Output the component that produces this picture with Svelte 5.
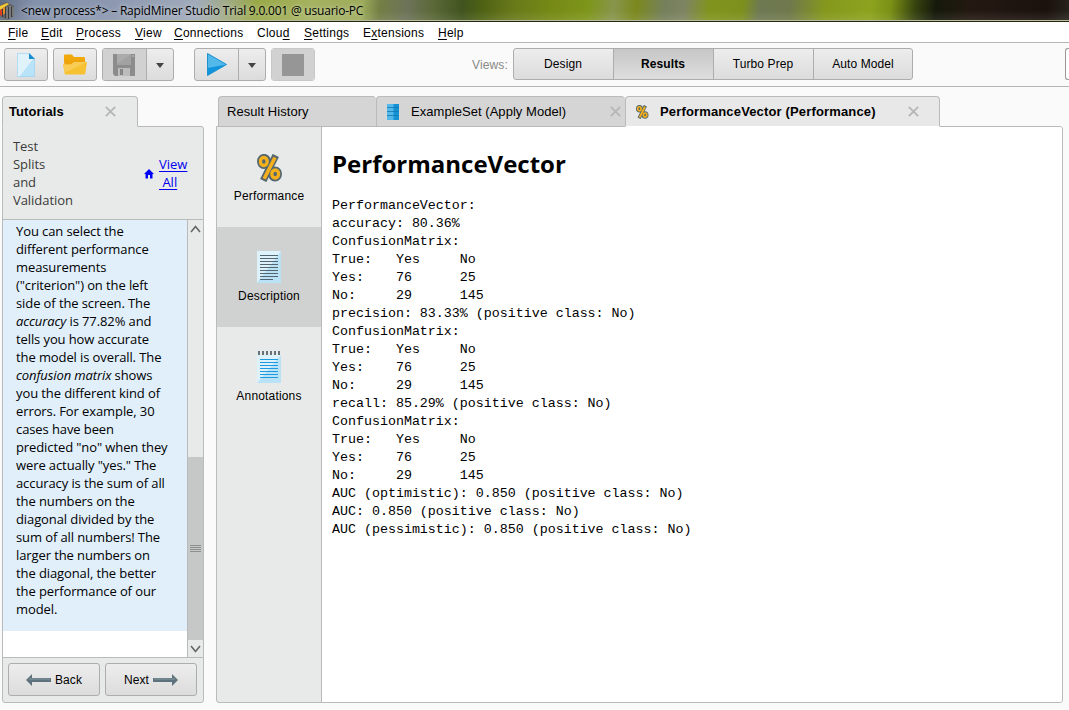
<script>
  const menus = [
    { pre: '', key: 'F', post: 'ile', w: 33 },
    { pre: '', key: 'E', post: 'dit', w: 35 },
    { pre: '', key: 'P', post: 'rocess', w: 59 },
    { pre: '', key: 'V', post: 'iew', w: 39 },
    { pre: '', key: 'C', post: 'onnections', w: 83 },
    { pre: 'Clou', key: 'd', post: '', w: 47 },
    { pre: '', key: 'S', post: 'ettings', w: 59 },
    { pre: 'E', key: 'x', post: 'tensions', w: 75 },
    { pre: '', key: 'H', post: 'elp', w: 40 }
  ];
  const views = ['Design', 'Results', 'Turbo Prep', 'Auto Model'];
  let view = $state('Results');
  const matrix = 'ConfusionMatrix:\nTrue:   Yes     No\nYes:    76      25\nNo:     29      145\n';
  const report =
    'PerformanceVector:\naccuracy: 80.36%\n' + matrix +
    'precision: 83.33% (positive class: No)\n' + matrix +
    'recall: 85.29% (positive class: No)\n' + matrix +
    'AUC (optimistic): 0.850 (positive class: No)\nAUC: 0.850 (positive class: No)\nAUC (pessimistic): 0.850 (positive class: No)';
</script>

{#snippet close()}
  <svg class="close" width="11" height="11" viewBox="0 0 11 11"><path d="M.8.8l9.4 9.4M10.2.8L.8 10.2" stroke="#b6b6b6" stroke-width="1.8" /></svg>
{/snippet}

{#snippet percent(size)}
  <svg width={size} height={size * 28 / 25} viewBox="0 0 25 28">
    <g fill="#56676f" stroke="#56676f">
      <ellipse cx="7" cy="7.500" rx="3.6" ry="4.2" stroke-width="6.8" /><ellipse cx="18" cy="20" rx="3.6" ry="4.200" stroke-width="6.8" />
      <path d="M18.800 1.500L6.200 26.500" stroke-width="7" />
    </g>
    <g fill="none" stroke="#f5b11c" stroke-width="3.3">
      <ellipse cx="6.8" cy="7.500" rx="3.4" ry="4" /><ellipse cx="18.200" cy="20" rx="3.4" ry="4" />
      <path d="M18 3.500L7.200 24.800" stroke-width="3.6" />
    </g>
  </svg>
{/snippet}

<div class="window">
  <header class="title">
    <svg width="15" height="18" viewBox="0 0 15 18">
      <path d="M0 3L6 0l8 4v10l-7 4-7-4z" fill="#62615f" />
      <path d="M0 4l7-3 2 1-9 6z" fill="#f3cb35" />
      <path d="M0 8l2-1v7l-2-1z" fill="#d93e20" /><path d="M3 6l2-1v6l-2 2z" fill="#ed8e22" />
      <path d="M2.500 7v8M5.500 5v11M8.500 5v12M11.500 5v10" stroke="#34373b" stroke-width=".9" />
      <path d="M7 5v12M10 4v12M13 5v9" stroke="#94989c" stroke-width=".9" />
    </svg>
    <span>&lt;new process*&gt; – RapidMiner Studio Trial 9.0.001 @ usuario-PC</span>
  </header>

  <nav class="menu">
    {#each menus as m}
      <span style:width="{m.w}px">{m.pre}<u>{m.key}</u>{m.post}</span>
    {/each}
  </nav>

  <div class="toolbar">
    <div class="group">
      <button class="tb" aria-label="New">
        <svg width="18" height="24" viewBox="0 0 18 24"><path d="M0 0h12l6 6v18H0z" fill="#b9e3f8" /><path d="M0 0h12l5 5L2 24H0z" fill="#e0f3fd" /><path d="M.4.4H12l5.600 5.600v17.600H.4z" fill="none" stroke="#a3d2ec" stroke-width=".8" /><path d="M12 0l6 6h-6z" fill="#1b8ccd" /></svg>
      </button>
    </div>
    <div class="group">
      <button class="tb" aria-label="Open">
        <svg width="24" height="21" viewBox="0 0 24 21"><path d="M1 1.5Q1 .5 2 .5h7l2 2.5h10q1 0 1 1v4H1z" fill="#f0a80a" /><path d="M1 6h21v14H2z" fill="#eea30c" /><path d="M0 10.5h8L11 8h13l-1.6 11q-.2 1.5-1.6 1.5H3q-1.3 0-1.500-1.500z" fill="#f6c232" /><path d="M0 10.5h8L11 8h13L2 18.5z" fill="#f9cd55" /></svg>
      </button>
    </div>
    <div class="group">
      <button class="tb off" aria-label="Save">
        <svg width="22" height="22" viewBox="0 0 22 22"><path d="M0 0h22v22H2l-2-2z" fill="#8c8c8c" /><path d="M4 0h14v11H4z" fill="#a2a2a2" /><path d="M4 0h14L4 10z" fill="#ababab" /><path d="M5 14h12v8H5z" fill="#bcbcbc" /><path d="M7 15h3v6H7z" fill="#858585" /><path d="M19 1h2v2h-2z" fill="#aaa" /></svg>
      </button>
      <button class="drop" aria-label="Save options"><i></i></button>
    </div>
    <div class="group run">
      <button class="tb" aria-label="Run">
        <svg width="20" height="23" viewBox="0 0 20 23"><path d="M.5.5L19.5 11.5.5 22.5z" fill="#1094dc" /><path d="M.5.5L19.5 11.5.5 15z" fill="#53b9eb" /><path d="M.5.5L19.5 11.5.5 22.5z" fill="none" stroke="#2092cf" /></svg>
      </button>
      <button class="drop" aria-label="Run options"><i></i></button>
    </div>
    <div class="group">
      <button class="tb off" aria-label="Stop"><b class="stop"></b></button>
    </div>
    <span class="viewlabel">Views:</span>
    <div class="group views">
      {#each views as v}
        <button class:on={view === v} onclick={() => (view = v)}>{v}</button>
      {/each}
    </div>
    <div class="search"></div>
  </div>

  <main>
    <section class="left">
      <div class="tabs">
        <div class="tab lt"><span>Tutorials</span>{@render close()}</div>
      </div>
      <div class="panel">
        <div class="tuthead">
          <div class="name">Test<br />Splits<br />and<br />Validation</div>
          <svg width="10" height="10" viewBox="0 0 10 10"><path d="M5 0l5 5H8.5v4.5H6V6H4v3.500H1.500V5H0z" fill="#0000f5" /></svg>
          <div class="viewall"><u>View</u><br /><u>&nbsp;All</u></div>
        </div>
        <div class="scroll">
          <div class="text"><p>You can select the<br />different performance<br />measurements<br />("criterion") on the left<br />side of the screen. The<br /><em>accuracy</em> is 77.82% and<br />tells you how accurate<br />the model is overall. The<br /><em>confusion matrix</em> shows<br />you the different kind of<br />errors. For example, 30<br />cases have been<br />predicted "no" when they<br />were actually "yes." The<br />accuracy is the sum of all<br />the numbers on the<br />diagonal divided by the<br />sum of all numbers! The<br />larger the numbers on<br />the diagonal, the better<br />the performance of our<br />model.</p></div>
          <div class="bar">
            <svg width="15" height="17" viewBox="0 0 15 17"><path d="M3 12l4.500-5.500L12 12" fill="none" stroke="#666" stroke-width="1.6" /></svg>
            <div class="track"></div>
            <div class="thumb"><i></i></div>
            <svg width="15" height="17" viewBox="0 0 15 17"><path d="M3 6l4.500 5.500L12 6" fill="none" stroke="#666" stroke-width="1.6" /></svg>
          </div>
        </div>
        <div class="foot">
          <button><svg width="25" height="12" viewBox="0 0 25 12"><path d="M0 6l6-6v4h19v4H6v4z" fill="#5d727c" /><path d="M3 5h21" stroke="#8799a1" /></svg>Back</button>
          <button>Next<svg width="25" height="12" viewBox="0 0 25 12"><path d="M25 6l-6-6v4H0v4h19v4z" fill="#5d727c" /><path d="M1 5h21" stroke="#8799a1" /></svg></button>
        </div>
      </div>
    </section>

    <section class="right">
      <div class="tabs">
        <div class="tab t1"><span>Result History</span></div>
        <div class="tab t2">
          <svg width="12" height="16" viewBox="0 0 12 16"><path d="M0 0h12v16H0z" fill="#1492d4" /><path d="M0 0h6.500v16H0z" fill="#54b8ea" /><path d="M0 3.500h12M0 7.500h12M0 11.500h12" stroke="#1277b0" stroke-width=".8" /></svg>
          <span>ExampleSet (Apply Model)</span>{@render close()}
        </div>
        <div class="tab t3">{@render percent(12.500)}<span>PerformanceVector (Performance)</span>{@render close()}</div>
      </div>
      <div class="panel row">
        <aside>
          <div class="item">{@render percent(25)}<span>Performance</span></div>
          <div class="item sel">
            <svg width="24" height="32" viewBox="0 0 24 32"><path d="M0 0h24v32H0z" fill="#b9e2f7" /><path d="M0 0h24L0 32z" fill="#def2fc" /><path d="M3 4.500h18M3 7.500h18M3 10.500h18M3 13.500h18M3 16.500h18M3 19.500h18M3 22.500h18M3 25.500h18M3 28.500h13" stroke="#53666f" /></svg>
            <span>Description</span>
          </div>
          <div class="item">
            <svg width="24" height="32" viewBox="0 0 24 32"><path d="M0 4h24v28H0z" fill="#b9e2f7" /><path d="M0 4h24L0 32z" fill="#def2fc" /><path d="M3 8.500h18M3 11.500h18M3 14.500h18M3 17.500h18M3 20.500h18M3 23.500h18M3 26.500h18" stroke="#1d9ae0" /><path d="M2 0v4M6 0v4M10 0v4M14 0v4M18 0v4M22 0v4" stroke="#66737a" stroke-width="2" /></svg>
            <span>Annotations</span>
          </div>
        </aside>
        <article>
          <h1>PerformanceVector</h1>
          <pre>{report}</pre>
        </article>
      </div>
    </section>
  </main>
</div>

<style>
  :global(body) { margin: 0; background: #fafafa; }
  .window {
    width: 1069px; height: 710px; overflow: hidden; display: flex; flex-direction: column;
    font: 12px "Liberation Sans", Arial, sans-serif; letter-spacing: .2px; color: #000; background: #fafafa;
  }
  svg { flex: none; display: block; }
  button { font: inherit; letter-spacing: inherit; color: inherit; padding: 0; margin: 0; }
  .title {
    box-sizing: border-box; height: 22px; flex: none; display: flex; align-items: center; gap: 6px;
    border-bottom: 1px solid #26270f; box-shadow: inset 0 -1px #b9bca0;
    background:
      radial-gradient(ellipse 60px 22px at 50px 4px, #8493ac88, transparent),
      linear-gradient(180deg, #0000 50%, #ffffff18),
      linear-gradient(97deg, #5c697c 0, #8290aa 35px, #8c98b0 110px, #a0aaba 195px, #a1ab87 225px, #98a845 255px, #a5b260 310px, #9dac5b 360px, #737e45 378px, #6c7359 405px, #5c6938 430px, #40541e 460px, #4f6214 480px, #68791a 510px, #768a15 550px, #7e961b 585px, #87954d 610px, #7b891e 632px, #74805b 660px, #7e8463 680px, #80941d 705px, #7d901d 738px, #6e7953 755px, #70794c 785px, #85981d 820px, #8da31e 865px, #799015 885px, #35410f 910px, #15190b 930px, #241912 965px, #1b110d 1040px, #292920 1069px);
  }
  .title span { font: 12px "Open Sans", sans-serif; letter-spacing: -.21px; white-space: nowrap; text-shadow: 0 0 6px #ffffff80, 0 0 4px #ffffff50; }
  .menu { height: 20px; flex: none; display: flex; padding-left: 8px; background: #fff; border-bottom: 1px solid #b5b5b5; line-height: 22px; }
  .menu span { flex: none; letter-spacing: .25px; }
  .menu u, .viewall u { text-underline-offset: 2px; text-decoration-thickness: 1px; text-decoration-skip-ink: none; }
  .toolbar { height: 43px; flex: none; display: flex; align-items: flex-start; padding-left: 4px; border-bottom: 1px solid #b5b5b5; }
  .group { box-sizing: border-box; display: flex; flex: none; height: 33px; margin: 5px 5px 0 0; border: 1px solid #adadad; border-radius: 3px; overflow: hidden; background: linear-gradient(#ededed, #dcdcdc); }
  .group button { border: 0; background: none; display: flex; align-items: center; justify-content: center; }
  .group .tb { width: 42px; }
  .group .tb:not(:only-child) { width: 43px; padding-right: 1px; box-sizing: border-box; }
  .group.run .tb:not(:only-child) { padding: 0 0 0 1px; }
  .group .off { background: #d1d1d1; }
  .group:has(.off:only-child) { border-color: #c8c8c8; }
  .group .drop { width: 27px; border-left: 1px solid #adadad; box-sizing: border-box; }
  .drop i { border: 4px solid transparent; border-top: 5px solid #444; border-bottom: 0; margin-top: 2px; }
  .run { margin-left: 15px; }
  .stop { width: 22px; height: 22px; background: #969696; }
  .viewlabel { margin: 15px 5px 0 auto; color: #888; line-height: 15px; letter-spacing: .15px; }
  .toolbar .views { margin: 5px 0 0; width: 400px; height: 32px; }
  .views button { box-sizing: border-box; width: 100px; flex: none; padding-right: 1px; border-left: 1px solid #adadad; letter-spacing: .1px; }
  .views button:first-child { border-left: 0; width: 99px; }
  .views .on { font-weight: bold; background: linear-gradient(#c6c6c6, #dedede); }
  .search { box-sizing: border-box; width: 4px; height: 32px; margin: 5px 0 0 152px; border: 1px solid #999; border-right: 0; border-radius: 3px 0 0 3px; background: #fff; }
  main { flex: 1; display: flex; gap: 12px; padding: 9px 6px 7px 2px; min-height: 0; }
  section { display: flex; flex-direction: column; min-height: 0; }
  .left { width: 202px; flex: none; }
  .right { flex: 1; }
  .tabs { display: flex; flex: none; height: 31px; margin-bottom: -1px; z-index: 1; }
  .tab { box-sizing: border-box; height: 31px; display: flex; align-items: center; border: 1px solid #b8bbba; border-radius: 4px 4px 0 0; background: #d5d5d5; white-space: pre; font-size: 13px; }
  .lt { width: 136px; font-weight: bold; background: #e8eae9; border-bottom-color: #e8eae9; padding: 0 21px 0 6px; justify-content: space-between; letter-spacing: .1px; }
  .right .tabs { padding-left: 2px; }
  .t1 { width: 158px; padding-left: 8px; border-right: 0; letter-spacing: .05px; }
  .t2 { width: 249px; padding: 0 4px 0 10px; border-right: 0; letter-spacing: .05px; }
  .t2 span { margin-left: 12px; }
  .tab .close { margin-left: auto; }
  .t3 { width: 315px; padding: 0 20px 0 10px; background: #e8e8e8; border-bottom-color: #fff; font-weight: bold; letter-spacing: .15px; }
  .t3 span { margin-left: 11.500px; }
  .panel { box-sizing: border-box; flex: 1; min-height: 0; border: 1px solid #b8bbba; border-radius: 0 3px 3px 3px; background: #e8eae9; display: flex; flex-direction: column; overflow: hidden; }
  .panel.row { flex-direction: row; }
  .tuthead { flex: none; height: 92px; box-sizing: border-box; display: flex; align-items: center; padding: 0 15px 1px 10px; font: 13px/18px "Open Sans", sans-serif; letter-spacing: 0; color: #3a3a3a; }
  .tuthead svg { margin-top: 2px; }
  .name { width: 131px; letter-spacing: -.05px; }
  .viewall { color: #00e; margin-left: 5px; white-space: nowrap; }
  .scroll { flex: 1; min-height: 0; display: flex; border: solid #b8bbba; border-width: 1px 0; background: #fff; }
  .text { width: 184px; flex: none; overflow: hidden; border-right: 1px solid #b8bbba; }
  .text p { margin: 0; height: 409px; padding: 2px 0 0 13px; background: #e1effb; font: 13px/18px "Open Sans", sans-serif; letter-spacing: -.1px; white-space: nowrap; }
  .bar { flex: 1; display: flex; flex-direction: column; background: #e8eae9; }
  .track { flex: 1; }
  .thumb { height: 183px; flex: none; background: #c6c8c7; display: flex; align-items: center; justify-content: center; }
  .thumb i { width: 11px; height: 7px; background: repeating-linear-gradient(#8d8f8e 0 1px, transparent 1px 2px); }
  .foot { flex: none; height: 44px; box-sizing: border-box; display: flex; gap: 5px; padding: 5px; }
  .foot button { box-sizing: border-box; width: 92px; height: 33px; border: 1px solid #adadad; border-radius: 3px; background: linear-gradient(#ededed, #dcdcdc); display: flex; align-items: center; justify-content: center; gap: 4px; letter-spacing: .1px; }
  aside { width: 104px; flex: none; border-right: 1px solid #b8bbba; }
  .item { box-sizing: border-box; height: 100px; display: flex; flex-direction: column; align-items: center; justify-content: flex-end; padding-bottom: 24px; line-height: 14px; letter-spacing: .17px; }
  .item svg { margin-bottom: 6px; }
  .item:first-child svg { margin-bottom: 7px; }
  .sel { background: #d0d2d1; }
  article { flex: 1; background: #fff; padding: 19px 0 0 10px; }
  h1 { margin: 0; font: bold 24px/36px "Open Sans", sans-serif; letter-spacing: 0; }
  pre { margin: 15px 0 0; font: 13.333px/18px "Liberation Mono", monospace; letter-spacing: -.01px; }
</style>
